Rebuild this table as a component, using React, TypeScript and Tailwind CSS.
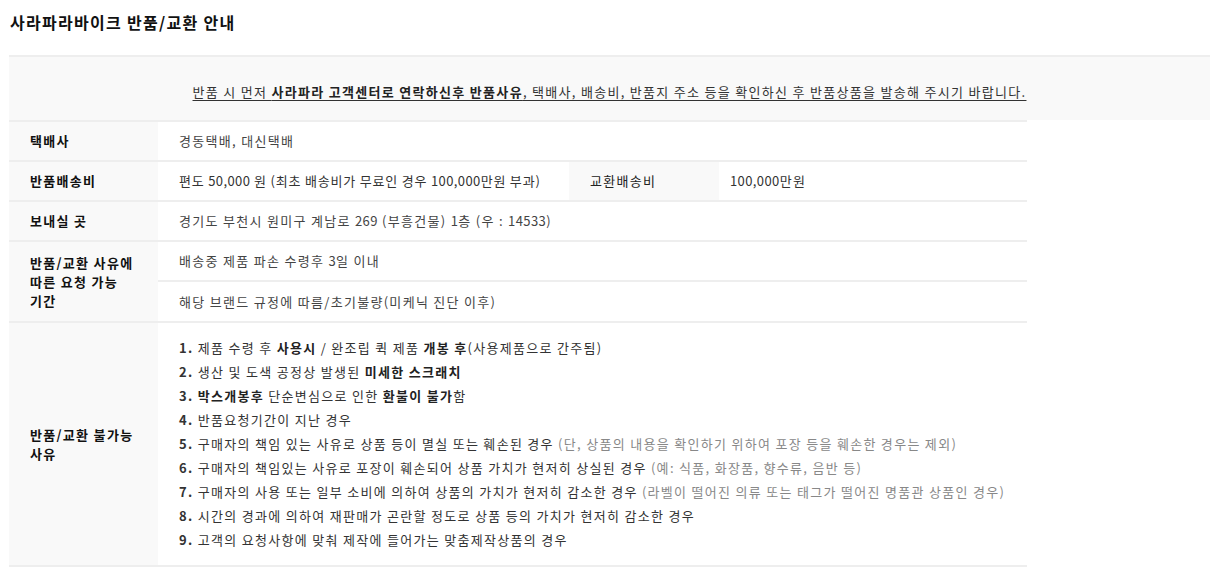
import React from 'react';

const line = 'align-middle border-y-2 border-[#eeeeee]';
const th = `bg-[#f9f9f9] pl-[21px] pr-4 text-left font-bold text-[#111] ${line}`;
const td = `pl-[21px] whitespace-nowrap text-[#444] ${line}`;

// 숫자는 자간을 좁게
function N({ children }: { children: React.ReactNode }) {
  return <span className="tracking-[0.4px]">{children}</span>;
}

type Part = { t: string; b?: boolean; g?: boolean };

const reasons: Part[][] = [
  [
    { t: '제품 수령 후 ' },
    { t: '사용시', b: true },
    { t: ' / 완조립 퀵 제품 ' },
    { t: '개봉 후', b: true },
    { t: '(사용제품으로 간주됨)' },
  ],
  [{ t: '생산 및 도색 공정상 발생된 ' }, { t: '미세한 스크래치', b: true }],
  [
    { t: '박스개봉후', b: true },
    { t: ' 단순변심으로 인한 ' },
    { t: '환불이 불가', b: true },
    { t: '함' },
  ],
  [{ t: '반품요청기간이 지난 경우' }],
  [
    { t: '구매자의 책임 있는 사유로 상품 등이 멸실 또는 훼손된 경우 ' },
    { t: '(단, 상품의 내용을 확인하기 위하여 포장 등을 훼손한 경우는 제외)', g: true },
  ],
  [
    { t: '구매자의 책임있는 사유로 포장이 훼손되어 상품 가치가 현저히 상실된 경우 ' },
    { t: '(예: 식품, 화장품, 향수류, 음반 등)', g: true },
  ],
  [
    { t: '구매자의 사용 또는 일부 소비에 의하여 상품의 가치가 현저히 감소한 경우 ' },
    { t: '(라벨이 떨어진 의류 또는 태그가 떨어진 명품관 상품인 경우)', g: true },
  ],
  [{ t: '시간의 경과에 의하여 재판매가 곤란할 정도로 상품 등의 가치가 현저히 감소한 경우' }],
  [{ t: '고객의 요청사항에 맞춰 제작에 들어가는 맞춤제작상품의 경우' }],
];

export default function App() {
  return (
    <div className="w-[1220px] h-[578px] overflow-hidden bg-white px-[9px] font-['Noto_Sans_CJK_KR',sans-serif] text-[13px] tracking-[1.3px] text-[#333]">
      {/* 제목 */}
      <h1 className="pl-[1px] pt-[10px] h-[55px] text-[16px] leading-[24px] font-bold text-[#111]">
        사라파라바이크 반품/교환 안내
      </h1>

      {/* 안내 문구 */}
      <div className="mr-[1px] h-[65px] flex items-center justify-center border-t-2 border-[#eeeeee] bg-[#f9f9f9] pt-[6px]">
        <p className="underline underline-offset-[3px] leading-[20px] text-[#333]">
          반품 시 먼저 <b className="font-bold text-[#222]">사라파라 고객센터로 연락하신후 반품사유</b>, 택배사, 배송비,
          반품지 주소 등을 확인하신 후 반품상품을 발송해 주시기 바랍니다.
        </p>
      </div>

      {/* 안내 표 */}
      <table className="w-[1018px] table-fixed border-collapse leading-[20px]">
        <colgroup>
          <col className="w-[149px]" />
          <col className="w-[411px]" />
          <col className="w-[150px]" />
          <col className="w-[308px]" />
        </colgroup>
        <tbody>
          <tr className="h-[40px]">
            <th className={th}>택배사</th>
            <td className={td} colSpan={3}>
              경동택배, 대신택배
            </td>
          </tr>
          <tr className="h-[40px]">
            <th className={th}>반품배송비</th>
            <td className={`pl-[21px] whitespace-nowrap tracking-[0.8px] text-[#333] ${line}`}>
              편도 <N>50,000</N> 원 (최초 배송비가 무료인 경우 <N>100,000</N>만원 부과)
            </td>
            <th className={`bg-[#f9f9f9] pl-[21px] text-left font-normal text-[#222] ${line}`}>
              교환배송비
            </th>
            <td className={`pl-[11px] whitespace-nowrap text-[#333] ${line}`}>
              <N>100,000</N>만원
            </td>
          </tr>
          <tr className="h-[40px]">
            <th className={th}>보내실 곳</th>
            <td className={td} colSpan={3}>
              경기도 부천시 원미구 계남로 <N>269</N> (부흥건물) <N>1</N>층 (우 : <N>14533</N>)
            </td>
          </tr>
          <tr className="h-[40px]">
            <th className={th + ' leading-[19px]'} rowSpan={2}>
              반품/교환 사유에
              <br />
              따른 요청 가능
              <br />
              기간
            </th>
            <td className={td} colSpan={3}>
              배송중 제품 파손 수령후 <N>3</N>일 이내
            </td>
          </tr>
          <tr className="h-[41px]">
            <td className={td} colSpan={3}>
              해당 브랜드 규정에 따름/초기불량(미케닉 진단 이후)
            </td>
          </tr>
          <tr>
            <th className={th + ' leading-[19px]'}>
              반품/교환 불가능
              <br />
              사유
            </th>
            <td className={`pl-[21px] py-[13px] whitespace-nowrap text-[#333] ${line}`} colSpan={3}>
              <ol className="leading-[24px]">
                {reasons.map((parts, i) => (
                  <li key={i}>
                    <b className="font-bold">{i + 1}.</b>{' '}
                    {parts.map((p, j) => (
                      <span
                        key={j}
                        className={p.b ? 'font-bold text-[#222]' : p.g ? 'text-[#888]' : undefined}
                      >
                        {p.t}
                      </span>
                    ))}
                  </li>
                ))}
              </ol>
            </td>
          </tr>
        </tbody>
      </table>
    </div>
  );
}
